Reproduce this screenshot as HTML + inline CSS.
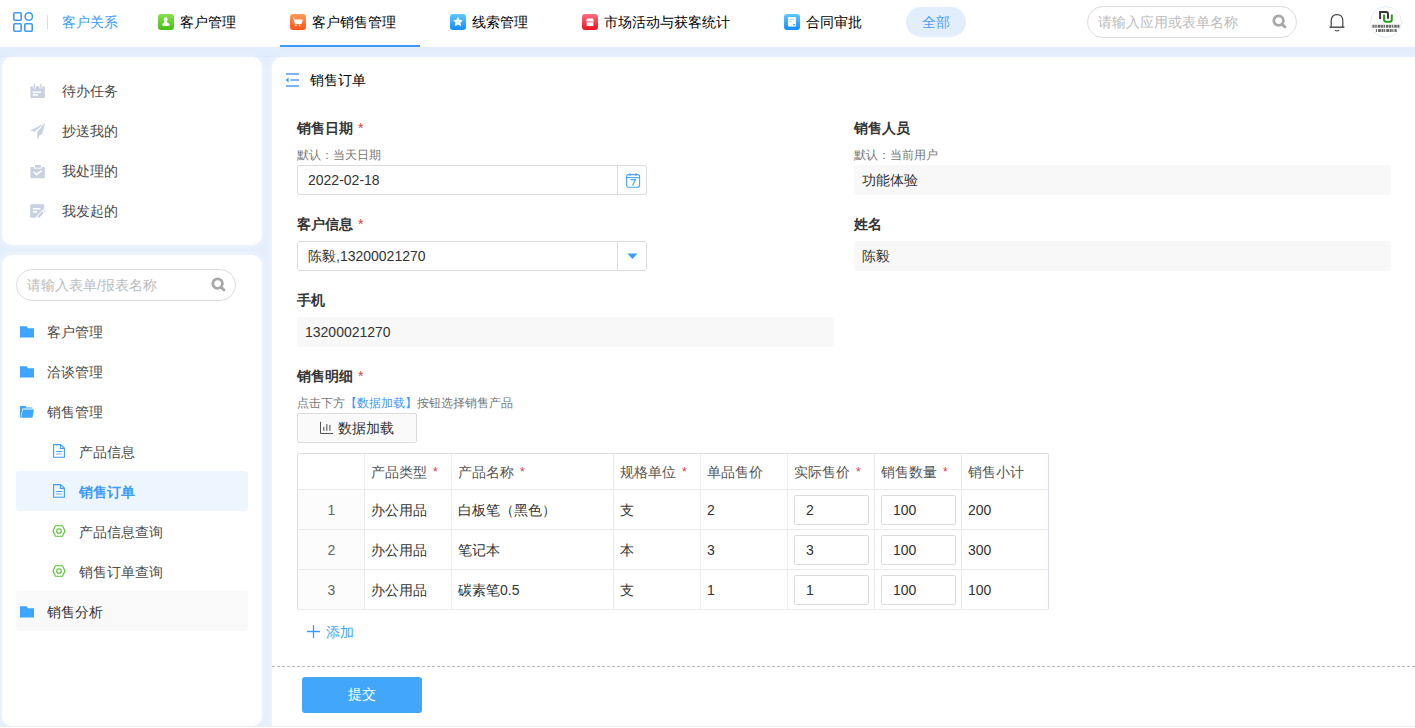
<!DOCTYPE html>
<html><head><meta charset="utf-8">
<style>
*{box-sizing:border-box;margin:0;padding:0}
html,body{width:1415px;height:728px;overflow:hidden;background:#e5effc;font-family:"Liberation Sans",sans-serif;font-size:14px;color:#333}
.a{position:absolute;white-space:nowrap;line-height:20px}
#top{position:absolute;left:0;top:0;width:1415px;height:47px;background:#fff}
.ni{position:absolute;top:14px;width:16px;height:16px;border-radius:3px}
.nt{color:#000}
.card{position:absolute;background:#fff;border-radius:10px;box-shadow:0 0 6px rgba(255,255,255,0.55)}
.sb{color:#4a4a4a}
.lbl{font-weight:bold;color:#333}
.req{color:#e0393e;font-weight:normal;margin-left:1px}
.hint{font-size:12px;color:#777}
.inp{position:absolute;border:1px solid #dcdcdc;border-radius:2px;background:#fff}
.ro{position:absolute;background:#f8f8f8;border-radius:2px}
.th{color:#555}
.hstar{color:#e0393e;font-size:12px;margin-left:6px;position:relative;top:-1px}
.td{color:#333}
.idx{color:#666}
</style></head><body>
<div id="top">
  <!-- grid icon -->
  <svg class="a" style="left:13px;top:12px" width="20" height="20" viewBox="0 0 20 20" fill="none" stroke="#3d9bff" stroke-width="1.6">
    <rect x="0.8" y="0.8" width="7.4" height="7.4" rx="1"/>
    <circle cx="15.8" cy="4.5" r="3.7"/>
    <rect x="0.8" y="11.8" width="7.4" height="7.4" rx="1"/>
    <rect x="11.8" y="11.8" width="7.4" height="7.4" rx="1"/>
  </svg>
  <div class="a" style="left:47px;top:15px;width:1px;height:14px;background:#ddd"></div>
  <div class="a" style="left:62px;top:12px;color:#3d9bff">客户关系</div>

  <div class="ni" style="left:158px;background:linear-gradient(#88e04c,#49bd18)"><svg style="position:absolute;left:0;top:0" width="16" height="16" viewBox="0 0 16 16"><circle cx="7.7" cy="5.2" r="1.9" fill="#fff"/><path d="M6.7 6.8 L8.7 6.8 L9.3 8.4 Q11.9 9.4 11.9 11.2 Q11.5 11.9 8 11.9 Q4.5 11.9 4.1 11.2 Q4.1 9.4 6.1 8.4 Z" fill="#fff"/></svg></div>
  <div class="a nt" style="left:180px;top:12px">客户管理</div>

  <div class="ni" style="left:290px;background:linear-gradient(#ff9d5c,#ff5416)"><svg style="position:absolute;left:0;top:0" width="16" height="16" viewBox="0 0 16 16"><path d="M3 3.4 L4 3.4 L4.5 5.6 L12.9 5.5 L11.6 10 L5 10 Z" fill="#fff"/><rect x="5.3" y="10.6" width="1.3" height="1.6" fill="#fff"/><rect x="8.9" y="10.6" width="1.3" height="1.6" fill="#fff"/></svg></div>
  <div class="a nt" style="left:312px;top:12px">客户销售管理</div>
  <div class="a" style="left:280px;top:45px;width:140px;height:2px;background:#3d9bff"></div>

  <div class="ni" style="left:450px;background:linear-gradient(#60c9ff,#168bff)"><svg style="position:absolute;left:0;top:0" width="16" height="16" viewBox="0 0 16 16"><path d="M8 3.4 L9.3 6.3 L12.2 6.6 L10 8.6 L10.6 11.6 L8 10.1 L5.4 11.6 L6 8.6 L3.8 6.6 L6.7 6.3 Z" fill="#fff" stroke="#fff" stroke-width="0.8" stroke-linejoin="round"/><circle cx="8" cy="8" r="0.9" fill="#bfe3ff"/></svg></div>
  <div class="a nt" style="left:472px;top:12px">线索管理</div>

  <div class="ni" style="left:582px;background:linear-gradient(#ff6f82,#f0121f)"><svg style="position:absolute;left:0;top:0" width="16" height="16" viewBox="0 0 16 16"><path d="M5 4.6 L11 4.6 L12 7.4 L4 7.4 Z" fill="#fff"/><rect x="4.6" y="8.3" width="6.8" height="3.6" rx="0.5" fill="#fff"/></svg></div>
  <div class="a nt" style="left:604px;top:12px">市场活动与获客统计</div>

  <div class="ni" style="left:784px;background:linear-gradient(#60c9ff,#168bff)"><svg style="position:absolute;left:0;top:0" width="16" height="16" viewBox="0 0 16 16"><rect x="4" y="3" width="8" height="9.6" rx="1" fill="#fff"/><rect x="5.2" y="5" width="4.6" height="1" fill="#b5dcff"/><rect x="5.2" y="7" width="2.4" height="1" fill="#b5dcff"/><rect x="9" y="10" width="2" height="1.3" fill="#4aa8ff"/></svg></div>
  <div class="a nt" style="left:806px;top:12px">合同审批</div>

  <div class="a" style="left:906px;top:7px;width:60px;height:30px;border-radius:15px;background:#e3eefd;color:#4a9ff5;text-align:center;line-height:30px">全部</div>

  <div class="a" style="left:1087px;top:6px;width:210px;height:32px;border:1px solid #dcdcdc;border-radius:16px"></div>
  <div class="a" style="left:1098px;top:12px;color:#bbb">请输入应用或表单名称</div>

  <div class="a" style="left:1370px;top:6px;width:32px;height:32px;border-radius:50%;border:1px solid #e3ecfb;background:#fff"></div>
</div>

<div class="a" style="left:0;top:47px;width:1415px;height:10px;background:linear-gradient(#e3edfc,#e2edfc 70%,#dce8fb)"></div>
<!-- sidebar card 1 -->
<div class="card" style="left:2px;top:57px;width:260px;height:188px"></div>
<div class="a sb" style="left:62px;top:81px">待办任务</div>
<div class="a sb" style="left:62px;top:121px">抄送我的</div>
<div class="a sb" style="left:62px;top:161px">我处理的</div>
<div class="a sb" style="left:62px;top:201px">我发起的</div>

<!-- sidebar card 2 -->
<div class="card" style="left:2px;top:255px;width:260px;height:471px"></div>
<div class="a" style="left:16px;top:269px;width:220px;height:32px;border:1px solid #dcdcdc;border-radius:16px"></div>
<div class="a" style="left:27px;top:275px;color:#bbb">请输入表单/报表名称</div>
<div class="a sb" style="left:47px;top:322px">客户管理</div>
<div class="a sb" style="left:47px;top:362px">洽谈管理</div>
<div class="a sb" style="left:47px;top:402px">销售管理</div>
<div class="a sb" style="left:79px;top:442px">产品信息</div>
<div class="a" style="left:16px;top:471px;width:232px;height:40px;background:#edf5ff;border-radius:4px"></div>
<div class="a" style="left:79px;top:482px;color:#3d9bff;font-weight:bold">销售订单</div>
<div class="a sb" style="left:79px;top:522px">产品信息查询</div>
<div class="a sb" style="left:79px;top:562px">销售订单查询</div>
<div class="a" style="left:16px;top:591px;width:232px;height:40px;background:#f9f9f9;border-radius:4px"></div>
<div class="a" style="left:47px;top:602px;color:#333">销售分析</div>

<!-- main panel -->
<div class="card" style="left:272px;top:57px;width:1153px;height:669px;border-radius:10px 0 0 0"></div>
<div class="a" style="left:310px;top:70px;color:#000">销售订单</div>

<div class="a lbl" style="left:297px;top:118px">销售日期 <span class="req">*</span></div>
<div class="a hint" style="left:297px;top:145px">默认：当天日期</div>
<div class="inp" style="left:297px;top:165px;width:350px;height:30px"></div>
<div class="a" style="left:617px;top:166px;width:1px;height:28px;background:#dcdcdc"></div>
<div class="a" style="left:308px;top:170px">2022-02-18</div>

<div class="a lbl" style="left:297px;top:214px">客户信息 <span class="req">*</span></div>
<div class="inp" style="left:297px;top:241px;width:350px;height:30px"></div>
<div class="a" style="left:617px;top:242px;width:1px;height:28px;background:#dcdcdc"></div>
<div class="a" style="left:308px;top:246px">陈毅,13200021270</div>

<div class="a lbl" style="left:854px;top:118px">销售人员</div>
<div class="a hint" style="left:854px;top:145px">默认：当前用户</div>
<div class="ro" style="left:854px;top:165px;width:537px;height:30px"></div>
<div class="a" style="left:862px;top:170px">功能体验</div>

<div class="a lbl" style="left:854px;top:214px">姓名</div>
<div class="ro" style="left:854px;top:241px;width:537px;height:30px"></div>
<div class="a" style="left:862px;top:246px">陈毅</div>

<div class="a lbl" style="left:297px;top:290px">手机</div>
<div class="ro" style="left:297px;top:317px;width:537px;height:30px"></div>
<div class="a" style="left:305px;top:322px">13200021270</div>

<div class="a lbl" style="left:297px;top:366px">销售明细 <span class="req">*</span></div>
<div class="a hint" style="left:297px;top:393px">点击下方<span style="color:#3d9bff">【数据加载】</span>按钮选择销售产品</div>
<div class="inp" style="left:297px;top:413px;width:120px;height:30px;background:#fafafa"></div>
<div class="a" style="left:338px;top:418px">数据加载</div>

<!-- TABLE -->
<div id="tbl">
<div class="a" style="left:298px;top:490px;width:66px;height:119px;background:#fcfcfc"></div>
<div class="a" style="left:364px;top:454px;width:1px;height:155px;background:#ebebeb"></div>
<div class="a" style="left:451px;top:454px;width:1px;height:155px;background:#ebebeb"></div>
<div class="a" style="left:613px;top:454px;width:1px;height:155px;background:#ebebeb"></div>
<div class="a" style="left:700px;top:454px;width:1px;height:155px;background:#ebebeb"></div>
<div class="a" style="left:787px;top:454px;width:1px;height:155px;background:#ebebeb"></div>
<div class="a" style="left:874px;top:454px;width:1px;height:155px;background:#ebebeb"></div>
<div class="a" style="left:961px;top:454px;width:1px;height:155px;background:#ebebeb"></div>
<div class="a" style="left:298px;top:489px;width:750px;height:1px;background:#ebebeb"></div>
<div class="a" style="left:298px;top:529px;width:750px;height:1px;background:#ebebeb"></div>
<div class="a" style="left:298px;top:569px;width:750px;height:1px;background:#ebebeb"></div>
<div class="a" style="left:298px;top:609px;width:750px;height:1px;background:#ebebeb"></div>
<div class="a" style="left:297px;top:453px;width:752px;height:157px;border:1px solid #dddde8;border-bottom-color:#ebebeb;border-radius:2px"></div>
<div class="a th" style="left:371px;top:462px">产品类型<span class="hstar">*</span></div>
<div class="a th" style="left:458px;top:462px">产品名称<span class="hstar">*</span></div>
<div class="a th" style="left:620px;top:462px">规格单位<span class="hstar">*</span></div>
<div class="a th" style="left:707px;top:462px">单品售价</div>
<div class="a th" style="left:794px;top:462px">实际售价<span class="hstar">*</span></div>
<div class="a th" style="left:881px;top:462px">销售数量<span class="hstar">*</span></div>
<div class="a th" style="left:968px;top:462px">销售小计</div>
<div class="a idx" style="left:298px;top:500px;width:67px;text-align:center">1</div>
<div class="a td" style="left:371px;top:500px">办公用品</div>
<div class="a td" style="left:458px;top:500px">白板笔（黑色）</div>
<div class="a td" style="left:620px;top:500px">支</div>
<div class="a td" style="left:707px;top:500px">2</div>
<div class="inp" style="left:794px;top:495px;width:75px;height:30px"></div>
<div class="a td" style="left:806px;top:500px">2</div>
<div class="inp" style="left:881px;top:495px;width:75px;height:30px"></div>
<div class="a td" style="left:893px;top:500px">100</div>
<div class="a td" style="left:968px;top:500px">200</div>
<div class="a idx" style="left:298px;top:540px;width:67px;text-align:center">2</div>
<div class="a td" style="left:371px;top:540px">办公用品</div>
<div class="a td" style="left:458px;top:540px">笔记本</div>
<div class="a td" style="left:620px;top:540px">本</div>
<div class="a td" style="left:707px;top:540px">3</div>
<div class="inp" style="left:794px;top:535px;width:75px;height:30px"></div>
<div class="a td" style="left:806px;top:540px">3</div>
<div class="inp" style="left:881px;top:535px;width:75px;height:30px"></div>
<div class="a td" style="left:893px;top:540px">100</div>
<div class="a td" style="left:968px;top:540px">300</div>
<div class="a idx" style="left:298px;top:580px;width:67px;text-align:center">3</div>
<div class="a td" style="left:371px;top:580px">办公用品</div>
<div class="a td" style="left:458px;top:580px">碳素笔0.5</div>
<div class="a td" style="left:620px;top:580px">支</div>
<div class="a td" style="left:707px;top:580px">1</div>
<div class="inp" style="left:794px;top:575px;width:75px;height:30px"></div>
<div class="a td" style="left:806px;top:580px">1</div>
<div class="inp" style="left:881px;top:575px;width:75px;height:30px"></div>
<div class="a td" style="left:893px;top:580px">100</div>
<div class="a td" style="left:968px;top:580px">100</div>
</div>

<div class="a" style="left:326px;top:622px;color:#42a5ff">添加</div>

<div class="a" style="left:272px;top:666px;width:1143px;height:1px;border-top:1px dashed #bbb"></div>
<div class="a" style="left:302px;top:677px;width:120px;height:36px;background:#42a7fb;border-radius:3px;color:#fff;text-align:center;line-height:34px">提交</div>

<!-- ICONS -->
<!-- top search icon -->
<svg class="a" style="left:1272px;top:14px" width="16" height="16" viewBox="0 0 16 16"><circle cx="6.6" cy="6.6" r="4.8" fill="none" stroke="#a8a8a8" stroke-width="2.8"/><path d="M10.4 10.4 L13 13" stroke="#a8a8a8" stroke-width="2.8" stroke-linecap="round"/></svg>
<!-- bell -->
<svg class="a" style="left:1328px;top:13px" width="18" height="20" viewBox="0 0 18 20"><path d="M3.2 14 L3.2 8 Q3.2 1.6 9 1.6 Q14.8 1.6 14.8 8 L14.8 14" fill="none" stroke="#444" stroke-width="1.2"/><path d="M1.6 14.2 L16.4 14.2" stroke="#444" stroke-width="1.4"/><path d="M7 17.2 Q9 18.6 11 17.2" fill="none" stroke="#555" stroke-width="1.2"/></svg>
<!-- avatar logo -->
<svg class="a" style="left:1371px;top:7px" width="30" height="30" viewBox="0 0 30 30"><path d="M9.1 12 L9.1 4.9 L15 4.9 Q17 4.9 17 6.9 L17 11.8" fill="none" stroke="#3a3536" stroke-width="2"/><path d="M13.1 7.6 L13.1 12.8 Q13.1 14.8 15.1 14.8 L18.8 14.8 Q20.8 14.8 20.8 12.8 L20.8 7.6" fill="none" stroke="#2a9a1e" stroke-width="2"/><path d="M1.4 19.3 L28.6 19.3" stroke="#6a6a6a" stroke-width="3" stroke-dasharray="2.2 0.6 1.6 0.8 2.6 0.5"/><path d="M4.9 23.6 L25.7 23.6" stroke="#6a6a6a" stroke-width="3" stroke-dasharray="1.2 1 2.8 0.6 2 0.6"/></svg>

<!-- sidebar card1 icons -->
<svg class="a" style="left:30px;top:83px" width="16" height="16" viewBox="0 0 16 16"><path d="M0.4 4.2 Q0.4 3.2 1.4 3.2 L13.8 3.2 Q14.8 3.2 14.8 4.2 L14.8 14 Q14.8 15 13.8 15 L1.4 15 Q0.4 15 0.4 14 Z" fill="#c8d1df"/><rect x="2.8" y="3" width="3" height="2.4" fill="#fff"/><rect x="9.4" y="3" width="3" height="2.4" fill="#fff"/><rect x="3.6" y="0.8" width="1.4" height="4.8" fill="#c8d1df"/><rect x="10.2" y="0.8" width="1.4" height="4.8" fill="#c8d1df"/><rect x="2.7" y="8.4" width="8.4" height="1.6" fill="#fff"/><rect x="2.7" y="11.1" width="5.3" height="1.6" fill="#fff"/></svg>
<svg class="a" style="left:30px;top:123px" width="16" height="17" viewBox="0 0 16 17"><path d="M15 0.2 L0.2 7.4 L4.4 8.8 Z" fill="#c8d1df"/><path d="M15 0.2 L7.2 9 L7.6 16.4 L10 11.6 L12.2 11.6 Z" fill="#c8d1df"/></svg>
<svg class="a" style="left:30px;top:164px" width="16" height="16" viewBox="0 0 16 16"><path d="M0.4 3.9 Q0.4 2.9 1.4 2.9 L13.8 2.9 Q14.8 2.9 14.8 3.9 L14.8 13.2 Q14.8 14.2 13.8 14.2 L1.4 14.2 Q0.4 14.2 0.4 13.2 Z" fill="#c8d1df"/><rect x="4" y="2.4" width="7.8" height="2.2" fill="#fff"/><rect x="4.9" y="1" width="6" height="2.7" rx="0.4" fill="#c8d1df"/><path d="M3.9 7.8 L6.4 10.6 L11.7 6.6" fill="none" stroke="#fff" stroke-width="1.6"/></svg>
<svg class="a" style="left:30px;top:203px" width="16" height="16" viewBox="0 0 16 16"><path d="M0.2 2.2 Q0.2 1.2 1.2 1.2 L13.2 1.2 Q14.2 1.2 14.2 2.2 L14.2 5.3 L5.1 14.8 L1.2 14.8 Q0.2 14.8 0.2 13.8 Z" fill="#c8d1df"/><rect x="2.9" y="5.1" width="7.6" height="1.5" fill="#fff"/><rect x="2.9" y="8" width="4.3" height="1.6" fill="#fff"/><path d="M8.2 14.2 L13 9" stroke="#c8d1df" stroke-width="2.2"/><path d="M14 8 L14.8 7.2" stroke="#c8d1df" stroke-width="1.8"/></svg>
<!-- sidebar search icon -->
<svg class="a" style="left:211px;top:277px" width="16" height="16" viewBox="0 0 16 16"><circle cx="6.6" cy="6.6" r="4.8" fill="none" stroke="#a8a8a8" stroke-width="2.8"/><path d="M10.4 10.4 L13 13" stroke="#a8a8a8" stroke-width="2.8" stroke-linecap="round"/></svg>

<!-- folders -->
<svg class="a" style="left:20px;top:326px" width="15" height="12" viewBox="0 0 15 12"><path d="M0 0.2 L6.6 0.2 L8 2.2 L14 2.2 L14 11.4 L0 11.4 Z" fill="#3fa6fd"/></svg>
<svg class="a" style="left:20px;top:366px" width="15" height="12" viewBox="0 0 15 12"><path d="M0 0.2 L6.6 0.2 L8 2.2 L14 2.2 L14 11.4 L0 11.4 Z" fill="#3fa6fd"/></svg>
<svg class="a" style="left:20px;top:406px" width="15" height="12" viewBox="0 0 15 12"><path d="M0 0 L5.8 0 L6.6 1.6 L12.4 1.6 L12.4 2.6 L2.4 2.6 L0.6 11.8 L0 11.8 Z" fill="#3fa6fd"/><path d="M2.8 3.6 L14 3.6 L12.4 11.8 L1.2 11.8 Z" fill="#3fa6fd"/></svg>
<svg class="a" style="left:20px;top:606px" width="15" height="12" viewBox="0 0 15 12"><path d="M0 0.2 L6.6 0.2 L8 2.2 L14 2.2 L14 11.4 L0 11.4 Z" fill="#3fa6fd"/></svg>

<!-- doc icons -->
<svg class="a" style="left:52px;top:443px" width="14" height="16" viewBox="0 0 14 16"><path d="M1.6 1.6 L8.6 1.6 L12.4 5.2 L12.4 14.2 L1.6 14.2 Z" fill="none" stroke="#3d9bff" stroke-width="1.1" stroke-linejoin="round"/><path d="M8.4 1.6 L8.4 5.4 L12.4 5.4" fill="none" stroke="#3d9bff" stroke-width="1.1"/><rect x="3.8" y="8" width="6.6" height="0.9" fill="#3d9bff"/><rect x="3.8" y="10.5" width="6" height="1" fill="#7fb2f7"/></svg>
<svg class="a" style="left:52px;top:483px" width="14" height="16" viewBox="0 0 14 16"><path d="M1.6 1.6 L8.6 1.6 L12.4 5.2 L12.4 14.2 L1.6 14.2 Z" fill="none" stroke="#3d9bff" stroke-width="1.1" stroke-linejoin="round"/><path d="M8.4 1.6 L8.4 5.4 L12.4 5.4" fill="none" stroke="#3d9bff" stroke-width="1.1"/><rect x="3.8" y="8" width="6.6" height="0.9" fill="#3d9bff"/><rect x="3.8" y="10.5" width="6" height="1" fill="#7fb2f7"/></svg>
<!-- hex icons -->
<svg class="a" style="left:52px;top:524px" width="14" height="14" viewBox="0 0 14 14"><path d="M3.5 1.8 L10.5 1.8 L13 7 L10.5 12.2 L3.5 12.2 L1 7 Z" fill="none" stroke="#55c02e" stroke-width="1.1"/><circle cx="7" cy="7" r="2.3" fill="none" stroke="#55c02e" stroke-width="1.1"/></svg>
<svg class="a" style="left:52px;top:564px" width="14" height="14" viewBox="0 0 14 14"><path d="M3.5 1.8 L10.5 1.8 L13 7 L10.5 12.2 L3.5 12.2 L1 7 Z" fill="none" stroke="#55c02e" stroke-width="1.1"/><circle cx="7" cy="7" r="2.3" fill="none" stroke="#55c02e" stroke-width="1.1"/></svg>

<!-- hamburger -->
<svg class="a" style="left:285px;top:72px" width="16" height="16" viewBox="0 0 16 16"><rect x="1" y="1" width="13" height="2" fill="#7db3f7"/><rect x="5.4" y="7" width="8.6" height="2" fill="#7db3f7"/><rect x="1" y="13" width="13" height="2" fill="#7db3f7"/><path d="M0.6 8 L3.6 5.6 L3.6 10.4 Z" fill="#3d9bff"/></svg>

<!-- calendar -->
<svg class="a" style="left:625px;top:172px" width="16" height="16" viewBox="0 0 16 16"><rect x="1.6" y="2.6" width="13" height="12.6" rx="2" fill="none" stroke="#4aa3ff" stroke-width="1.1"/><path d="M1.6 5.6 L14.6 5.6" stroke="#4aa3ff" stroke-width="1.1"/><path d="M5 1.2 L5 4 M11 1.2 L11 4" stroke="#4aa3ff" stroke-width="1"/><path d="M5.6 7.6 L10.4 7.6 L7.6 13.4" fill="none" stroke="#4aa3ff" stroke-width="1.2"/></svg>
<!-- dropdown arrow -->
<svg class="a" style="left:627px;top:253px" width="11" height="7" viewBox="0 0 11 7"><path d="M0.4 0.6 L10.4 0.6 L5.4 6 Z" fill="#3d9bff"/></svg>

<!-- chart icon -->
<svg class="a" style="left:319px;top:421px" width="15" height="14" viewBox="0 0 15 14"><path d="M1.5 0.8 L1.5 12.5 L14 12.5" fill="none" stroke="#555" stroke-width="1"/><rect x="4.2" y="5.8" width="1.2" height="4" fill="#666"/><rect x="7.2" y="3.1" width="1.2" height="6.7" fill="#666"/><rect x="10.3" y="3.9" width="1.2" height="5.9" fill="#666"/></svg>

<!-- plus -->
<svg class="a" style="left:306px;top:624px" width="15" height="15" viewBox="0 0 15 15"><path d="M7.5 1 L7.5 14 M1 7.5 L14 7.5" stroke="#3d9bff" stroke-width="1.3"/></svg>
<div class="a" style="left:0;top:726px;width:1415px;height:1px;background:#ececec"></div>
<div class="a" style="left:0;top:727px;width:1415px;height:1px;background:#fff"></div>
</body></html>
